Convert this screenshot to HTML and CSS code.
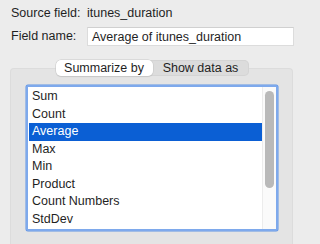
FILE: index.html
```html
<!DOCTYPE html>
<html>
<head>
<meta charset="utf-8">
<link rel="stylesheet" href="styles.css">
</head>
<body>
<div class="dialog">
  <div class="row source">
    <span class="label">Source field:</span>
    <span class="value">itunes_duration</span>
  </div>
  <div class="row namerow">
    <span class="label name-label">Field name:</span>
    <div class="input">Average of itunes_duration</div>
  </div>
  <div class="tabview">
    <div class="tabs">
      <div class="seg">
        <span class="tab active">Summarize by</span>
        <span class="tab">Show data as</span>
      </div>
    </div>
    <div class="panel">
      <div class="list">
        <div class="items">
          <div class="item">Sum</div>
          <div class="item">Count</div>
          <div class="item selected">Average</div>
          <div class="item">Max</div>
          <div class="item">Min</div>
          <div class="item">Product</div>
          <div class="item">Count Numbers</div>
          <div class="item">StdDev</div>
        </div>
        <div class="scrollbar"><div class="thumb"></div></div>
      </div>
    </div>
  </div>
</div>
</body>
</html>
```
FILE: styles.css
```css
html, body {
  margin: 0;
  padding: 0;
  background: #ececec;
  height: 100%;
  overflow: hidden;
}
.dialog {
  font-family: "Liberation Sans", Arial, sans-serif;
  font-size: 12.5px;
  color: #1f1f1f;
  padding-top: 4px;
}
.row {
  display: flex;
  align-items: center;
  padding-left: 11px;
}
.source {
  height: 17px;
}
.label {
  width: 76px;
}
.namerow {
  margin-top: 5px;
  height: 20px;
}
.input {
  height: 19px;
  line-height: 19px;
  background: #ffffff;
  border: 1px solid #dcdcdc;
  border-top-color: #d0d0d0;
  padding-left: 4px;
  box-sizing: border-box;
  width: 207px;
}
.tabview {
  margin: 14px 0 0 10px;
  width: 283px;
}
.tabs {
  display: flex;
  justify-content: center;
  position: relative;
  z-index: 2;
  margin-bottom: -8px;
  padding-left: 1px;
}
.seg {
  display: flex;
  background: #dcdcdc;
  border-radius: 5px;
  height: 16px;
  box-shadow: inset 0 0 0 1px #d4d4d4;
}
.tab {
  display: block;
  width: 96px;
  text-align: center;
  line-height: 16px;
  height: 16px;
}
.tab.active {
  width: 97px;
  background: #ffffff;
  border-radius: 5px;
  box-shadow: 0 0 0 0.5px #c8c8c8, 0 1px 1px rgba(0,0,0,0.12);
}
.panel {
  background: #e4e4e4;
  border: 1px solid #dcdcdc;
  border-bottom: none;
  border-radius: 4px 4px 0 0;
  height: 176px;
  padding: 16px 0 0 15px;
  box-sizing: border-box;
}
.list {
  width: 252px;
  height: 146px;
  box-sizing: border-box;
  border: 2px solid #7ea9ec;
  border-radius: 2px;
  background: #ffffff;
  display: flex;
  box-shadow: 0 0 0 0.5px #5f93e4;
}
.items {
  flex: 1;
  padding: 1px 0 0 1px;
}
.item {
  height: 17.5px;
  line-height: 17.5px;
  padding-left: 3px;
}
.item.selected {
  background: #0b5fd4;
  color: #ffffff;
}
.scrollbar {
  width: 14px;
  border-left: 1px solid #ececec;
  background: #fafafa;
  padding: 4px 0 0 2px;
  box-sizing: border-box;
}
.thumb {
  width: 9px;
  height: 97px;
  border-radius: 4.5px;
  background: #b9b9b9;
}
```
